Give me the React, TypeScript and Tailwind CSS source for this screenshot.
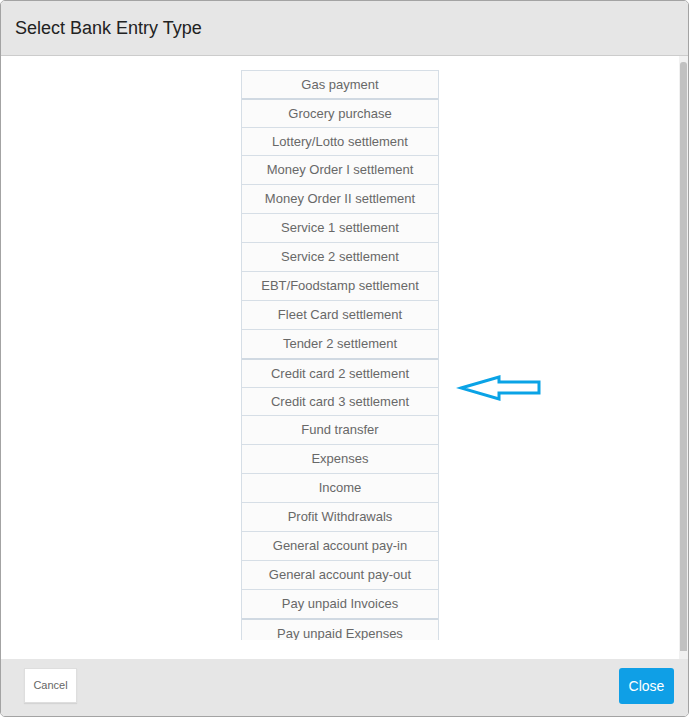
const ENTRY_TYPES: { label: string; split?: boolean; short?: boolean }[] = [
  { label: "Gas payment", short: true },
  { label: "Grocery purchase", split: true },
  { label: "Lottery/Lotto settlement", short: true },
  { label: "Money Order I settlement" },
  { label: "Money Order II settlement" },
  { label: "Service 1 settlement" },
  { label: "Service 2 settlement" },
  { label: "EBT/Foodstamp settlement" },
  { label: "Fleet Card settlement" },
  { label: "Tender 2 settlement" },
  { label: "Credit card 2 settlement", split: true },
  { label: "Credit card 3 settlement", short: true },
  { label: "Fund transfer" },
  { label: "Expenses" },
  { label: "Income" },
  { label: "Profit Withdrawals" },
  { label: "General account pay-in" },
  { label: "General account pay-out" },
  { label: "Pay unpaid Invoices" },
  { label: "Pay unpaid Expenses", split: true },
];

function HintArrow() {
  return (
    <svg
      className="pointer-events-none absolute left-[456px] top-[373px]"
      width="88"
      height="30"
      viewBox="456 373 88 30"
      aria-hidden
    >
      <path
        d="M461 388 L499 377 L499 382 L539 382 L539 393 L499 393 L499 399 Z"
        fill="none"
        stroke="#0aa3e6"
        strokeWidth="3"
        strokeLinejoin="miter"
      />
    </svg>
  );
}

export default function App() {
  return (
    <div
      className="relative h-[717px] w-[689px] bg-white"
      style={{ fontFamily: '"Liberation Sans", Arial, sans-serif' }}
    >
      <div className="flex h-full flex-col overflow-hidden rounded-[5px] border border-[#a3a3a3]">
        {/* Header */}
        <div className="flex h-[55px] shrink-0 items-center border-b border-[#cccccc] bg-[#e6e6e6] px-[14px]">
          <h1 className="text-[18px] text-[#222222]">Select Bank Entry Type</h1>
        </div>

        {/* Body with scroll track */}
        <div className="flex h-[603px] shrink-0 bg-white">
          <div className="flex flex-1 justify-center pt-[14px] pb-[19px]">
            <ul className="h-[570px] w-[198px] overflow-hidden border-x border-[#d6dee6]">
              {ENTRY_TYPES.map((item) => (
                <li
                  key={item.label}
                  className={`flex items-center justify-center bg-[#fbfbfb] text-[13px] text-[#686868] ${
                    item.short ? "h-[28px]" : "h-[29px]"
                  } ${
                    item.split
                      ? "border-t-2 border-[#d0d9e2]"
                      : "border-t border-[#d6dee6]"
                  }`}
                >
                  {item.label}
                </li>
              ))}
            </ul>
          </div>
          <div className="w-[9px] shrink-0 bg-[#f1f1f1] pt-[6px]">
            <div className="ml-[1px] h-[589px] w-[7px] rounded-t-[3px] bg-[#c1c1c1]" />
          </div>
        </div>

        {/* Footer */}
        <div className="flex h-[57px] shrink-0 items-start justify-between bg-[#e6e6e6] pt-[9px] pl-[23px] pr-[14px]">
          <button
            type="button"
            className="h-[35px] w-[53px] border border-[#dedede] bg-white text-[11px] text-[#666666] shadow-[0_1px_1px_rgba(0,0,0,0.08)]"
          >
            Cancel
          </button>
          <button
            type="button"
            className="h-[36px] w-[55px] rounded-[3px] bg-[#0f9fe6] text-[14px] text-white"
          >
            Close
          </button>
        </div>
      </div>

      <HintArrow />
    </div>
  );
}
